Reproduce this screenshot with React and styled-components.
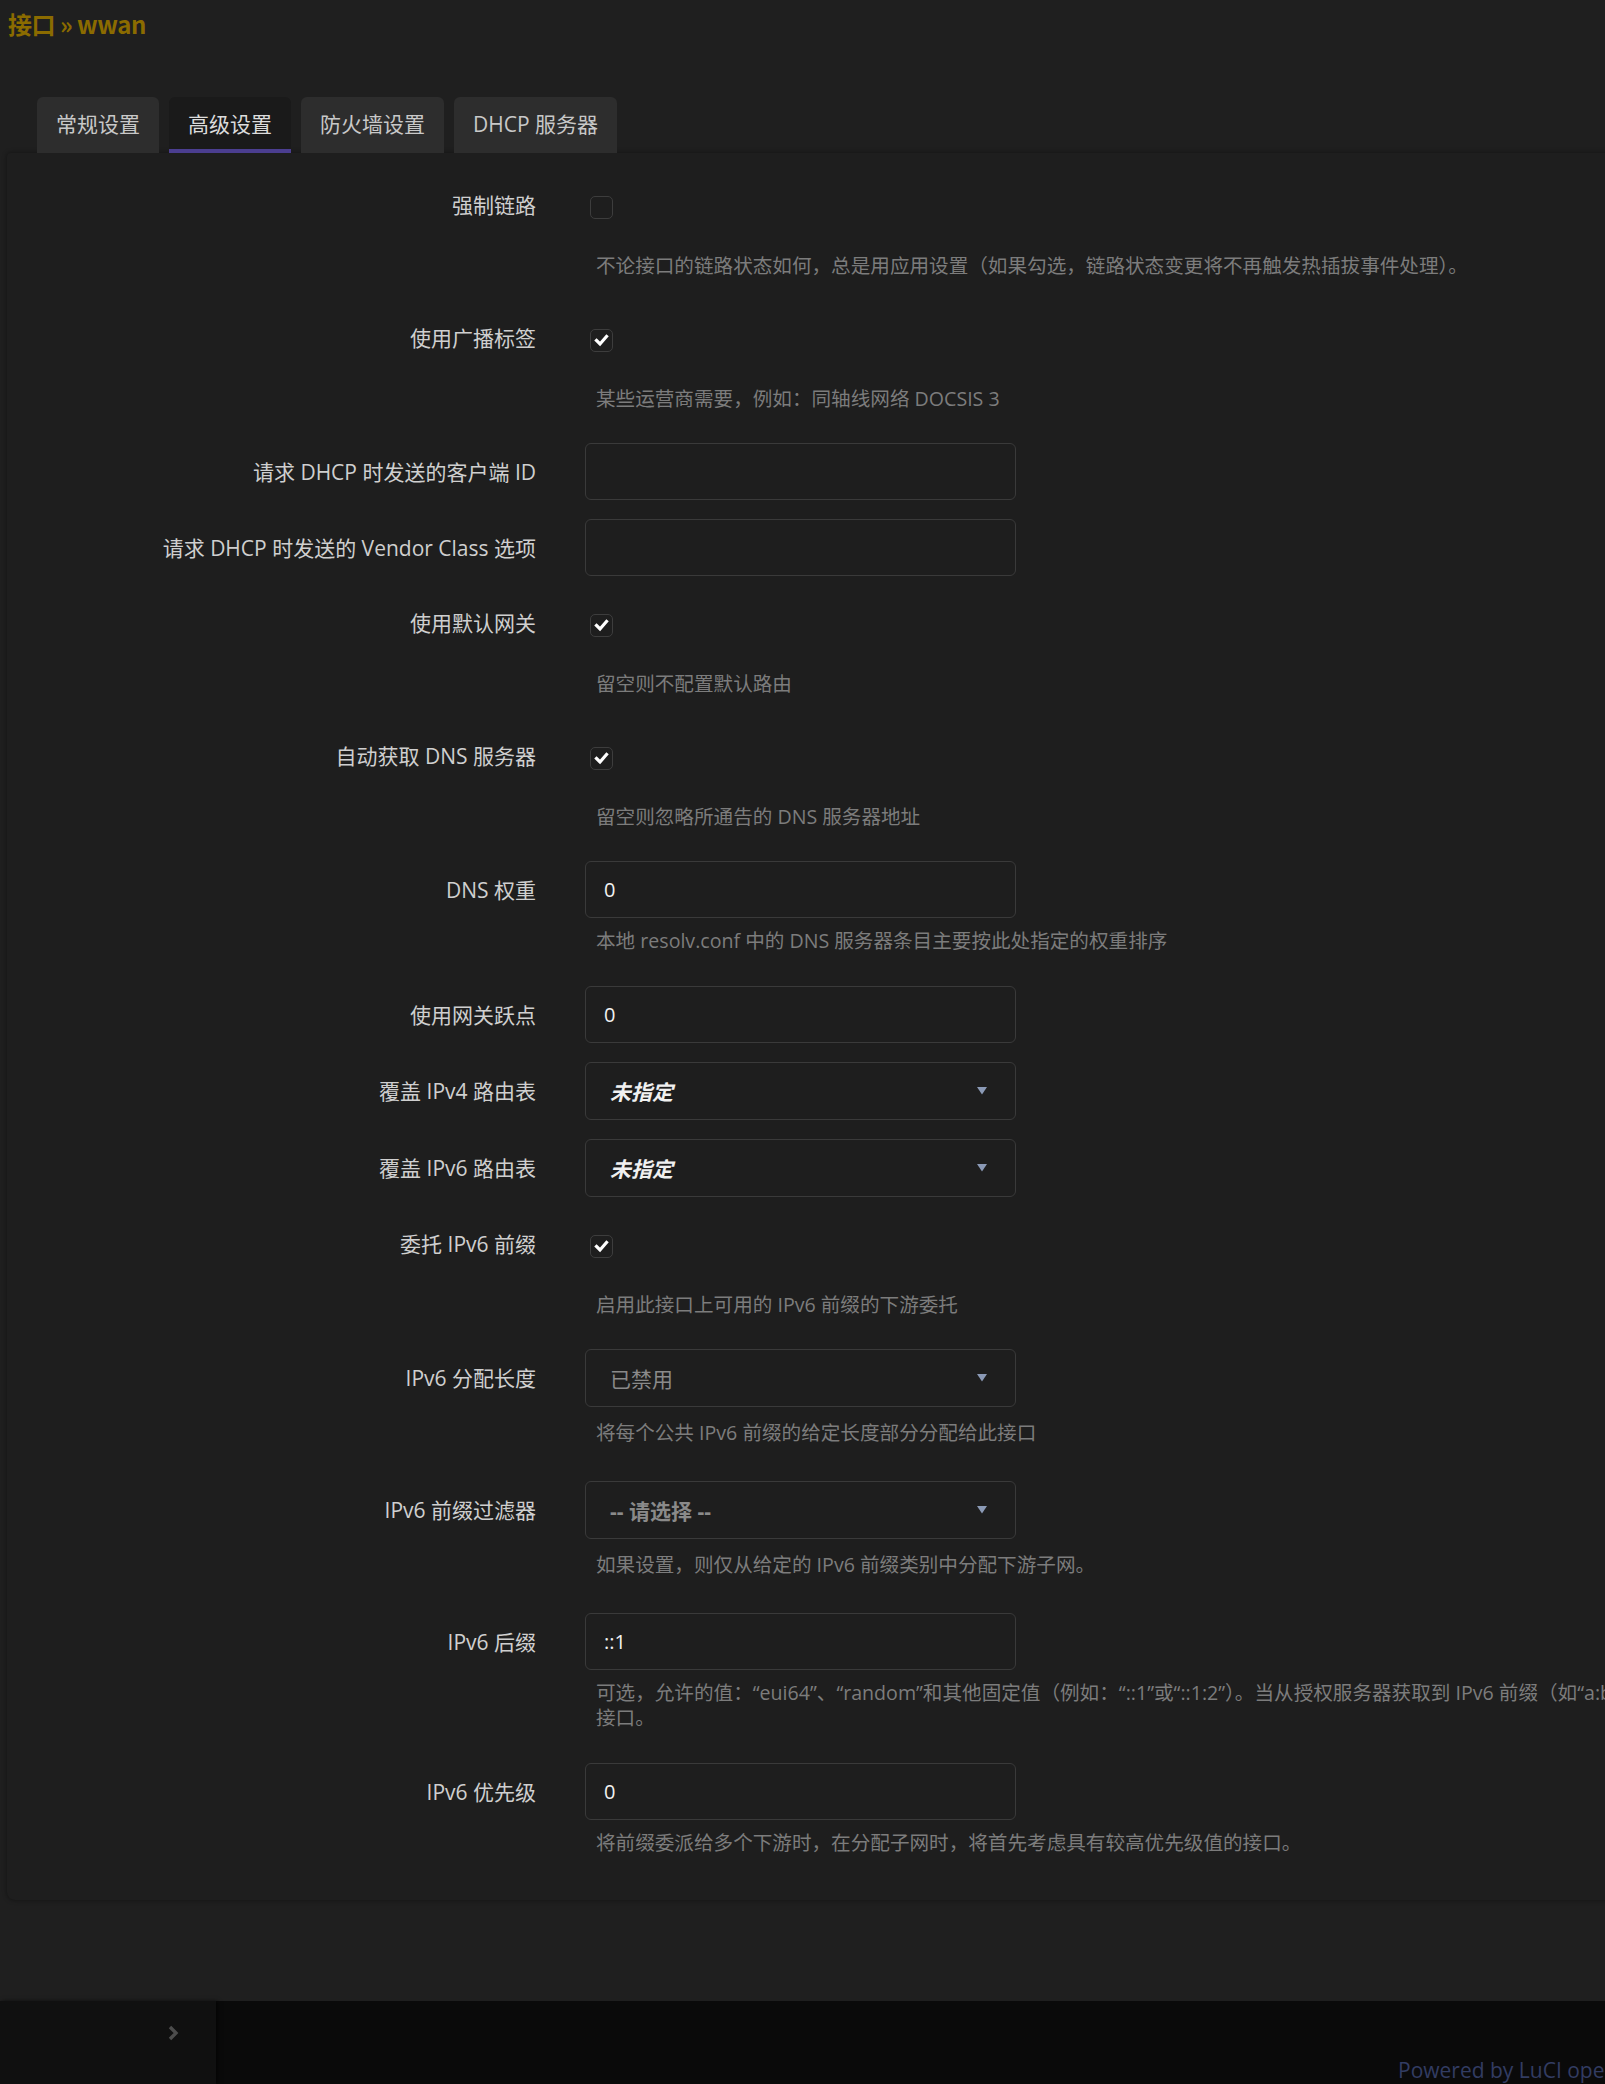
import styled, { createGlobalStyle } from "styled-components";

const GlobalStyle = createGlobalStyle`
  html, body {
    margin: 0;
    padding: 0;
    background: #1f1f1f;
    overflow-x: hidden;
  }
  body {
    font-family: "Open Sans", "Noto Sans CJK SC", sans-serif;
  }
`;

const rows = [
  { label: "强制链路", type: "checkbox", checked: false, desc: "不论接口的链路状态如何，总是用应用设置（如果勾选，链路状态变更将不再触发热插拔事件处理）。" },
  { label: "使用广播标签", type: "checkbox", checked: true, desc: "某些运营商需要，例如：同轴线网络 DOCSIS 3" },
  { label: "请求 DHCP 时发送的客户端 ID", type: "input", value: "" },
  { label: "请求 DHCP 时发送的 Vendor Class 选项", type: "input", value: "" },
  { label: "使用默认网关", type: "checkbox", checked: true, desc: "留空则不配置默认路由" },
  { label: "自动获取 DNS 服务器", type: "checkbox", checked: true, desc: "留空则忽略所通告的 DNS 服务器地址" },
  { label: "DNS 权重", type: "input", value: "0", desc: "本地 resolv.conf 中的 DNS 服务器条目主要按此处指定的权重排序" },
  { label: "使用网关跃点", type: "input", value: "0" },
  { label: "覆盖 IPv4 路由表", type: "select", value: "未指定", variant: "strong" },
  { label: "覆盖 IPv6 路由表", type: "select", value: "未指定", variant: "strong" },
  { label: "委托 IPv6 前缀", type: "checkbox", checked: true, desc: "启用此接口上可用的 IPv6 前缀的下游委托" },
  { label: "IPv6 分配长度", type: "select", value: "已禁用", variant: "muted", desc: "将每个公共 IPv6 前缀的给定长度部分分配给此接口" },
  { label: "IPv6 前缀过滤器", type: "select", value: "-- 请选择 --", variant: "placeholder", desc: "如果设置，则仅从给定的 IPv6 前缀类别中分配下游子网。" },
  {
    label: "IPv6 后缀",
    type: "input",
    value: "::1",
    desc: [
      "可选，允许的值：“eui64”、“random”和其他固定值（例如：“::1”或“::1:2”）。当从授权服务器获取到 IPv6 前缀（如“a:b:c:d::”）时，使用后缀（如“::1”）合成 IPv6 地址（“a:b:c:d::1”）用于此",
      "接口。",
    ],
  },
  { label: "IPv6 优先级", type: "input", value: "0", desc: "将前缀委派给多个下游时，在分配子网时，将首先考虑具有较高优先级值的接口。" },
];

const tabs = ["常规设置", "高级设置", "防火墙设置", "DHCP 服务器"];

// control height, label lift and the space around the help text differ per kind of row
const kinds = {
  checkbox: { h: 60, lift: 6, top: 16, bottom: 13 },
  input: { h: 57, lift: 2, top: 10, bottom: 14 },
  select: { h: 58, lift: 2, top: 13, bottom: 17 },
};

const CheckIcon = () => (
  <svg width="23" height="23" viewBox="0 0 23 23">
    <polyline points="6.5,11.5 10,15 16.5,7.5" fill="none" stroke="#fff" strokeWidth="3.2" strokeLinecap="square" />
  </svg>
);

const Caret = () => (
  <svg width="10" height="8" viewBox="0 0 10 8">
    <polygon points="0,0 10,0 5,7.5" fill="#8b9ab6" />
  </svg>
);

const Chevron = () => (
  <svg width="14" height="18" viewBox="0 0 14 18">
    <polyline points="4,3 10,9 4,15" fill="none" stroke="#4c4c4c" strokeWidth="3.4" />
  </svg>
);

const App = () => {
  return (
    <Page>
      <GlobalStyle />
      <Main>
        <Title>接口 » wwan</Title>
        <TabList>
          {tabs.map((t, i) => (
            <Tab key={t} $active={i === 1}>{t}</Tab>
          ))}
        </TabList>
        <Panel>
          {rows.map((row) => {
            const k = kinds[row.type];
            return (
              <Row key={row.label}>
                <Label $h={k.h} $lift={k.lift}>{row.label}</Label>
                <Field>
                  <Control $h={k.h}>
                    {row.type === "checkbox" && <Checkbox>{row.checked && <CheckIcon />}</Checkbox>}
                    {row.type === "input" && <TextInput>{row.value}</TextInput>}
                    {row.type === "select" && (
                      <Select $h={k.h}>
                        <SelectText $variant={row.variant}>{row.value}</SelectText>
                        <Caret />
                      </Select>
                    )}
                  </Control>
                  {row.desc && (
                    <Desc $top={k.top} $bottom={k.bottom}>
                      {Array.isArray(row.desc)
                        ? row.desc.map((line) => <div key={line}>{line}</div>)
                        : row.desc}
                    </Desc>
                  )}
                </Field>
              </Row>
            );
          })}
        </Panel>
      </Main>
      <Footer>
        <Sidebar>
          <Chevron />
        </Sidebar>
        <FooterMain>
          <Powered>Powered by LuCI openwrt-23.05 branch / ArgonTheme v2.3.1 / OpenWrt 23.05.2</Powered>
        </FooterMain>
      </Footer>
    </Page>
  );
};

export default App;

const Page = styled.div`
  width: 100%;
  height: 2084px;
  display: flex;
  flex-direction: column;
  overflow: hidden;
`;

const Main = styled.div`
  flex: 1;
  padding-left: 7px;
  padding-top: 7px;
`;

const Title = styled.h2`
  margin: 0 0 0 1px;
  height: 34px;
  line-height: 34px;
  font-family: "Noto Sans CJK SC", sans-serif;
  font-size: 24px;
  font-weight: 700;
  letter-spacing: -0.5px;
  color: #8b6b00;
`;

const TabList = styled.div`
  display: flex;
  gap: 10px;
  margin-top: 56px;
  padding-left: 30px;
`;

const Tab = styled.div`
  height: 56px;
  box-sizing: border-box;
  padding: 0 19px;
  display: flex;
  align-items: center;
  font-size: 21px;
  border-radius: 6px 6px 0 0;
  color: ${(p) => (p.$active ? "#dcdcdc" : "#c8c8c8")};
  background: ${(p) => (p.$active ? "#1a1a1a" : "#2d2d2d")};
  border-bottom: 4px solid ${(p) => (p.$active ? "#4b3e90" : "transparent")};
`;

const Panel = styled.div`
  margin-right: -30px;
  background: #1e1e1e;
  border-radius: 4px 0 8px 8px;
  box-shadow: 0 0 5px rgba(0, 0, 0, 0.45);
  padding: 24px 0 31px;
  display: flex;
  flex-direction: column;
  gap: 19px;
  overflow: hidden;
`;

const Row = styled.div`
  display: flex;
  align-items: flex-start;
`;

const Label = styled.div`
  width: 529px;
  flex-shrink: 0;
  height: ${(p) => p.$h}px;
  padding-bottom: ${(p) => p.$lift}px;
  box-sizing: border-box;
  display: flex;
  align-items: center;
  justify-content: flex-end;
  font-size: 21px;
  color: #cfcfcf;
  white-space: nowrap;
`;

const Field = styled.div`
  margin-left: 49px;
  flex: 1;
  min-width: 0;
`;

const Control = styled.div`
  height: ${(p) => p.$h}px;
  display: flex;
  align-items: center;
`;

const Checkbox = styled.div`
  width: 23px;
  height: 23px;
  margin-left: 5px;
  box-sizing: border-box;
  border: 1px solid #3d3d3d;
  border-radius: 5px;
  display: flex;
  align-items: center;
  justify-content: center;
  svg {
    flex-shrink: 0;
  }
`;

const TextInput = styled.div`
  width: 431px;
  height: ${(p) => p.$h || 57}px;
  box-sizing: border-box;
  border: 1px solid #3a3a3a;
  border-radius: 6px;
  background: #1e1e1e;
  padding: 0 18px;
  display: flex;
  align-items: center;
  font-size: 20px;
  color: #f2f2f2;
`;

const Select = styled(TextInput)`
  justify-content: space-between;
  padding: 0 28px 0 24px;
`;

const SelectText = styled.span`
  font-size: 21px;
  font-weight: ${(p) => (p.$variant === "muted" ? 400 : 700)};
  font-style: ${(p) => (p.$variant === "strong" ? "italic" : "normal")};
  color: ${(p) => (p.$variant === "strong" ? "#f0f0f0" : "#8a8a8a")};
`;

const Desc = styled.div`
  margin-top: ${(p) => p.$top}px;
  padding-left: 11px;
  padding-bottom: ${(p) => p.$bottom}px;
  font-size: 19.6px;
  line-height: 25px;
  color: #7c7c7c;
  white-space: nowrap;
`;

const Footer = styled.div`
  height: 83px;
  display: flex;
  background: #0a0a0a;
`;

const Sidebar = styled.div`
  width: 216px;
  background: #101010;
  box-shadow: 2px 0 4px rgba(0, 0, 0, 0.6);
  display: flex;
  justify-content: flex-end;
  padding: 23px 36px 0 0;
  box-sizing: border-box;
`;

const FooterMain = styled.div`
  flex: 1;
  min-width: 0;
  display: flex;
  justify-content: flex-start;
  align-items: flex-end;
  padding: 0 0 0 1182px;
  overflow: hidden;
`;

const Powered = styled.div`
  font-size: 21px;
  color: #323c62;
  white-space: nowrap;
`;
